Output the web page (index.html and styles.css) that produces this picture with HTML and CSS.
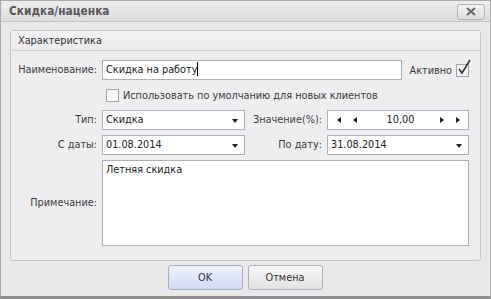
FILE: index.html
```html
<!DOCTYPE html>
<html>
<head>
<meta charset="utf-8">
<link rel="stylesheet" href="styles.css">
</head>
<body>
<div class="window">
  <div class="titlebar">
    <span class="title">Скидка/наценка</span>
    <span class="close"><svg width="12" height="9" viewBox="0 0 12 9"><path d="M2 1 L10 8 M10 1 L2 8" stroke="#6a6a6a" stroke-width="2.2"/></svg></span>
  </div>
  <div class="content">
    <div class="group">
      <div class="group-head">Характеристика</div>
      <div class="form">
        <div class="lbl">Наименование:</div>
        <div class="row1">
          <div class="input name">Скидка на работу<span class="caret"></span></div>
          <span class="active-lbl">Активно</span>
          <span class="check checked"><svg width="16" height="18" viewBox="0 0 16 18"><path d="M3 10 L6 14 L14 1" fill="none" stroke="#333" stroke-width="1.6"/></svg></span>
        </div>

        <div class="lbl"></div>
        <div class="row2">
          <span class="check"></span>
          <span>Использовать по умолчанию для новых клиентов</span>
        </div>

        <div class="lbl">Тип:</div>
        <div class="input combo">Скидка<span class="arrow"></span></div>
        <div class="lbl">Значение(%):</div>
        <div class="input spin">
          <span class="tri l"></span><span class="tri l"></span>
          <span class="val">10,00</span>
          <span class="tri r"></span><span class="tri r"></span>
        </div>

        <div class="lbl">С даты:</div>
        <div class="input combo">01.08.2014<span class="arrow"></span></div>
        <div class="lbl">По дату:</div>
        <div class="input combo">31.08.2014<span class="arrow"></span></div>

        <div class="lbl memo-lbl">Примечание:</div>
        <div class="input memo">Летняя скидка</div>
      </div>
    </div>
    <div class="buttons">
      <button class="btn ok">OK</button>
      <button class="btn">Отмена</button>
    </div>
  </div>
</div>
</body>
</html>
```
FILE: styles.css
```css
html, body { margin: 0; padding: 0; }
body {
  font-family: "DejaVu Sans Condensed", "DejaVu Sans", sans-serif;
  font-size: 10.8px;
  color: #3a3a3a;
  background: #e6e6e8;
}
.window {
  width: 491px;
  height: 299px;
  box-sizing: border-box;
  border: 1px solid #a9a9ab;
  border-bottom: 3px solid #8f8f92;
  background: #e9e9eb;
  display: flex;
  flex-direction: column;
}
.titlebar {
  height: 20px;
  flex: none;
  display: flex;
  align-items: center;
  justify-content: space-between;
  padding: 0 5px 0 8px;
  background: linear-gradient(#eeeeef, #dcdcde);
  border-bottom: 1px solid #c4c4c6;
}
.title {
  font-weight: bold;
  font-size: 11.8px;
  color: #58585a;
}
.close {
  width: 26px;
  height: 14px;
  margin-top: 1px;
  border: 1px solid #b4b4b6;
  border-radius: 3px;
  background: linear-gradient(#f4f4f5, #dddddf);
  display: flex;
  align-items: center;
  justify-content: center;
}
.content {
  flex: 1;
  padding: 8px 9px 0 9px;
  display: flex;
  flex-direction: column;
}
.group {
  border: 1px solid #c6c6c9;
  border-radius: 3px;
  background: #eeeef0;
  height: 231px;
  box-sizing: border-box;
}
.group-head {
  height: 19px;
  line-height: 19px;
  padding-left: 7px;
  border-bottom: 1px solid #d2d2d5;
  color: #333;
  background: linear-gradient(#f2f2f4, #ebebed);
}
.form {
  display: grid;
  grid-template-columns: 86px 143px 72px 142px;
  grid-template-rows: 20px 20px 20px 20px 86px;
  column-gap: 5px;
  row-gap: 5px;
  padding: 9px 0 0 0;
}
.lbl {
  text-align: right;
  line-height: 20px;
  white-space: nowrap;
  color: #3c3c3c;
}
.row1 {
  grid-column: 2 / 5;
  display: flex;
  align-items: center;
}
.row2 {
  grid-column: 2 / 5;
  display: flex;
  align-items: center;
  padding-left: 4px;
  gap: 4px;
}
.input {
  box-sizing: border-box;
  height: 20px;
  border: 1px solid #acb0b8;
  background: #fff;
  color: #222;
  padding: 0 3px;
  line-height: 18px;
  position: relative;
  white-space: nowrap;
}
.name { flex: 1; }
.caret {
  display: inline-block;
  width: 1px;
  height: 14px;
  background: #000;
  vertical-align: -3px;
}
.active-lbl { margin-left: 8px; margin-right: 4px; }
.check {
  width: 11px;
  height: 11px;
  border: 1px solid #9fa3aa;
  background: linear-gradient(#f4f4f4, #fff);
  position: relative;
  flex: none;
}
.check.checked { background: #f3f3f3; }
.check svg { position: absolute; left: -1px; top: -6px; }
.combo .arrow {
  position: absolute;
  right: 6px;
  top: 8px;
  width: 0;
  height: 0;
  border-left: 3px solid transparent;
  border-right: 3px solid transparent;
  border-top: 4px solid #222;
}
.spin {
  display: flex;
  align-items: center;
  padding: 0 8px 0 9px;
}
.spin .val { flex: 1; text-align: center; padding-left: 4px; }
.tri { width: 0; height: 0; border-top: 3px solid transparent; border-bottom: 3px solid transparent; }
.tri.l { border-right: 4px solid #222; margin-right: 12px; }
.tri.l + .tri.l { margin-right: 0; }
.tri.r { border-left: 4px solid #222; margin-left: 12px; }
.val + .tri.r { margin-left: 0; }
.memo {
  grid-column: 2 / 5;
  height: 86px;
  line-height: 16px;
  padding-top: 1px;
}
.memo-lbl { line-height: 86px; }
.buttons {
  display: flex;
  justify-content: center;
  gap: 5px;
  padding-top: 4px;
  padding-right: 1px;
}
.btn {
  width: 75px;
  height: 25px;
  border: 1px solid #adb0b6;
  border-radius: 3px;
  background: linear-gradient(#f7f7f8, #e2e2e4);
  font-family: "DejaVu Sans Condensed", "DejaVu Sans", sans-serif;
  font-size: 10.8px;
  color: #333;
  padding: 0;
}
.btn.ok {
  background: linear-gradient(#eef2fc, #cfdaf3);
  border-color: #a6adbd;
}
```
